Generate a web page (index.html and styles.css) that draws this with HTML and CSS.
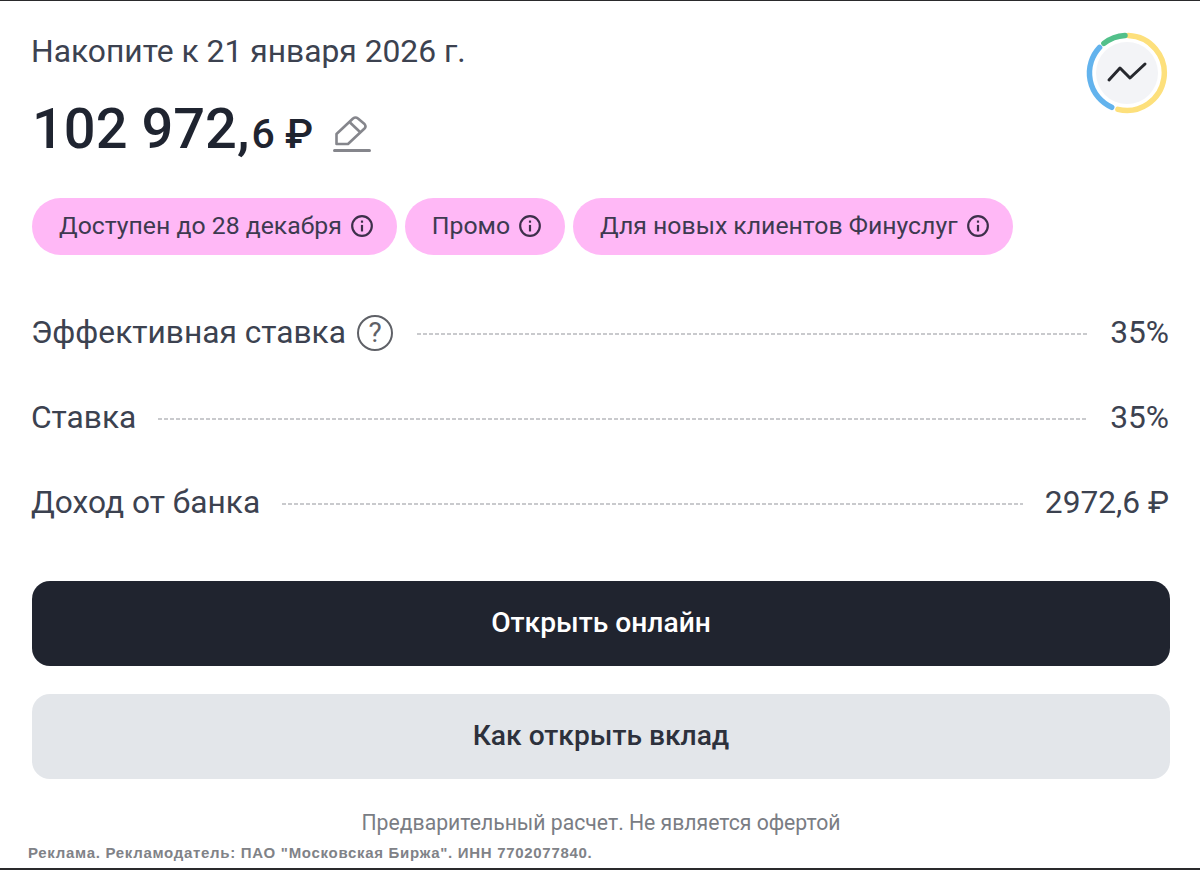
FILE: index.html
```html
<!DOCTYPE html>
<html lang="ru">
<head>
    <meta charset="UTF-8">
    <meta name="viewport" content="width=device-width, initial-scale=1.0">
    <title>Вклад</title>
    <link rel="stylesheet" href="styles.css">
</head>
<body>
    <div class="card">
        <div class="head">
            <div>
                <p class="head-title">Накопите к 21 января 2026 г.</p>
                <div class="amount">
                    <span class="amount-main">102 972,</span><span class="amount-small">6 ₽</span>
                    <svg class="edit-icon" width="38" height="38" viewBox="0 0 38 38" fill="none" stroke="#85868c">
                        <path d="M3.5 28 V18 L20 2.5 Q22.5 0.5 25 2.5 L31.5 8 Q33.5 10.5 31.5 12.5 L15 28 Z" stroke-width="2.6" stroke-linejoin="round"/>
                        <path d="M17 6.5 L27 16" stroke-width="2.6"/>
                        <path d="M1.5 34.5 H36.5" stroke-width="3" stroke-linecap="round"/>
                    </svg>
                </div>
            </div>
            <svg class="ring" width="84" height="84" viewBox="0 0 84 84" fill="none">
                <circle cx="42" cy="42" r="31" fill="#f3f4f7"/>
                <path d="M43.3 4.5 A37.5 37.5 0 1 1 32.9 78.4" stroke="#fde07c" stroke-width="5.5" stroke-linecap="round"/>
                <path d="M26.7 76.3 A37.5 37.5 0 0 1 14.6 16.4" stroke="#63b3ed" stroke-width="5.5" stroke-linecap="round"/>
                <path d="M18.9 12.4 A37.5 37.5 0 0 1 40 4.5" stroke="#52c08a" stroke-width="5.5" stroke-linecap="round"/>
                <path d="M24 49 L35 37 L45 47 L60 33" stroke="#26282e" stroke-width="3" stroke-linecap="round" stroke-linejoin="round"/>
            </svg>
        </div>

        <div class="tags">
            <span class="tag">Доступен до 28 декабря
                <svg class="info-icon" viewBox="0 0 22 22" fill="none" stroke="#3d2f4a" stroke-width="2"><circle cx="11" cy="11" r="9"/><path d="M11 10 V16"/><path d="M11 6 V8"/></svg>
            </span>
            <span class="tag">Промо
                <svg class="info-icon" viewBox="0 0 22 22" fill="none" stroke="#3d2f4a" stroke-width="2"><circle cx="11" cy="11" r="9"/><path d="M11 10 V16"/><path d="M11 6 V8"/></svg>
            </span>
            <span class="tag">Для новых клиентов Финуслуг
                <svg class="info-icon" viewBox="0 0 22 22" fill="none" stroke="#3d2f4a" stroke-width="2"><circle cx="11" cy="11" r="9"/><path d="M11 10 V16"/><path d="M11 6 V8"/></svg>
            </span>
        </div>

        <div class="rows">
            <div class="row">
                <span class="row-name">Эффективная ставка</span>
                <span class="help">?</span>
                <span class="dots"></span>
                <span class="row-value">35%</span>
            </div>
            <div class="row">
                <span class="row-name">Ставка</span>
                <span class="dots"></span>
                <span class="row-value">35%</span>
            </div>
            <div class="row">
                <span class="row-name">Доход от банка</span>
                <span class="dots"></span>
                <span class="row-value">2972,6 ₽</span>
            </div>
        </div>

        <button class="btn btn-dark">Открыть онлайн</button>
        <button class="btn btn-light">Как открыть вклад</button>

        <p class="note">Предварительный расчет. Не является офертой</p>
    </div>
    <p class="ad">Реклама. Рекламодатель: ПАО "Московская Биржа". ИНН 7702077840.</p>
</body>
</html>
```

FILE: styles.css
```css
* {
    margin: 0;
    padding: 0;
    box-sizing: border-box;
}

html, body {
    height: 870px;
    overflow: hidden;
}

body {
    background: #fff;
    font-family: Roboto, "Liberation Sans", sans-serif;
    color: #3c4250;
    border-top: 1px solid #2a2a2c;
    border-bottom: 2px solid #2a2a2c;
}

.card {
    padding: 30px 30px 0 32px;
}

.head {
    display: flex;
    justify-content: space-between;
    align-items: flex-start;
}

.head-title {
    margin-left: -1px;
    font-size: 31.8px;
    line-height: 40px;
}

.amount {
    display: flex;
    align-items: baseline;
    margin-top: 23px;
    color: #1f2430;
    font-weight: 500;
}

.amount-main {
    font-size: 56px;
    line-height: 70px;
}

.amount-small {
    margin-left: 2px;
    font-size: 41px;
}

.edit-icon {
    margin-left: 20px;
    margin-top: 12px;
    align-self: center;
}

.ring {
    margin-right: 1px;
}

.tags {
    display: flex;
    gap: 8px;
    margin-top: 34px;
}

.tag {
    display: flex;
    align-items: center;
    gap: 8px;
    height: 57px;
    padding: 0 23px 2px 27px;
    border-radius: 29px;
    background: #ffb8f6;
    color: #3d3a50;
    font-size: 24.8px;
}

.info-icon {
    width: 24px;
    height: 24px;
}

.rows {
    margin-top: 35px;
}

.row {
    display: flex;
    align-items: center;
    height: 85px;
    padding-right: 1px;
    font-size: 31.7px;
    line-height: 85px;
}

.row-name {
    margin-left: -1px;
    white-space: nowrap;
}

.help {
    display: flex;
    align-items: center;
    justify-content: center;
    width: 36px;
    height: 36px;
    margin: 0 2px 0 11px;
    border: 2.5px solid #5f6167;
    border-radius: 50%;
    color: #5f6167;
    font-size: 28px;
    line-height: 1;
}

.dots {
    flex: 1;
    height: 2px;
    margin: 2px 22px 0 22px;
    background: repeating-linear-gradient(90deg, #c9cacd 0 4px, transparent 4px 6px);
}

.btn {
    display: block;
    width: 100%;
    height: 85px;
    padding-bottom: 3px;
    border: none;
    border-radius: 18px;
    font-family: inherit;
    font-size: 28.2px;
    font-weight: 500;
}

.btn-dark {
    margin-top: 36px;
    background: #20242f;
    color: #fff;
}

.btn-light {
    margin-top: 28px;
    background: #e3e6ea;
    color: #2d313c;
}

.note {
    margin-top: 29px;
    text-align: center;
    font-size: 21.2px;
    line-height: 30px;
    color: #7a7d84;
}

.ad {
    margin: 5px 0 0 28px;
    font-family: "Liberation Sans", Arial, sans-serif;
    font-size: 15px;
    font-weight: 700;
    letter-spacing: 0.7px;
    line-height: 20px;
    color: #808287;
}
```
